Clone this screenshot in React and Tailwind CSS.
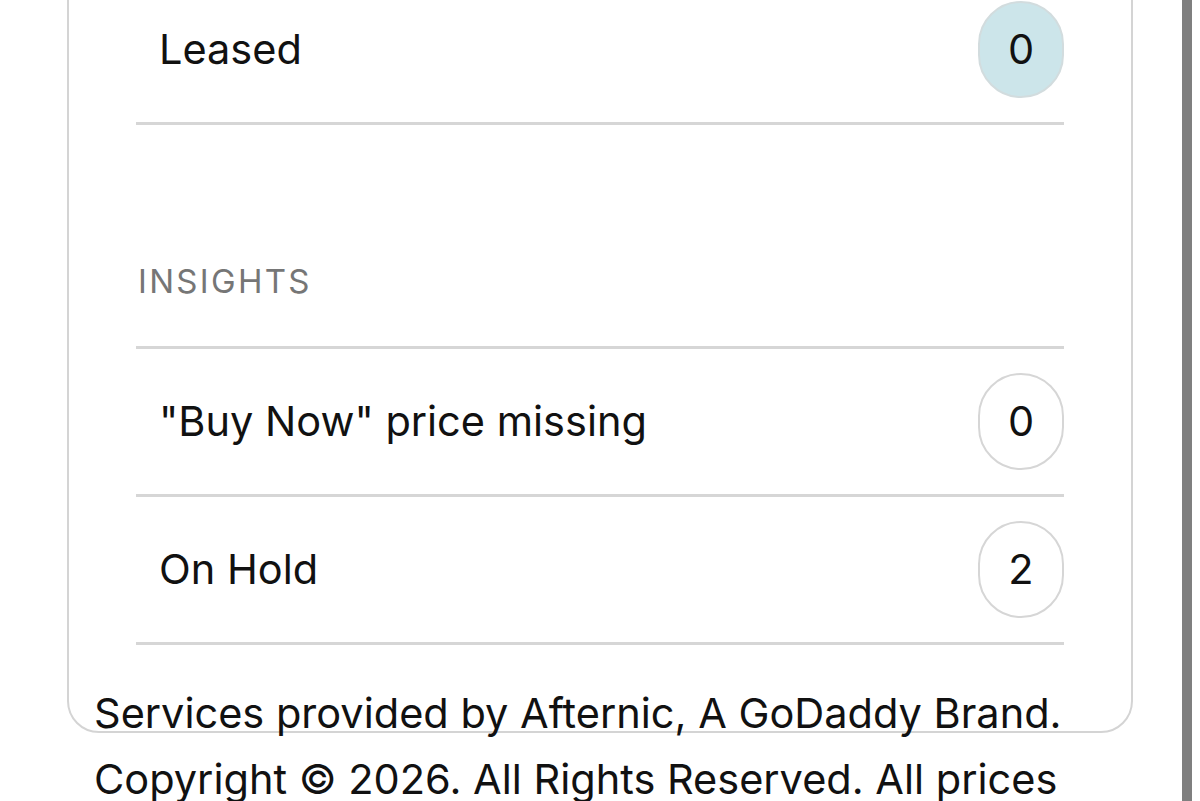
import React from "react";

function Row({ label, count, active }) {
  return (
    <div className="flex h-[148px] items-center justify-between border-b-[3px] border-[#d6d6d6] pl-[23px]">
      <span>{label}</span>
      <span
        className={
          "flex h-[97px] w-[86px] items-center justify-center rounded-full border-2 " +
          (active ? "border-[#d2dcde] bg-[#cce5ea]" : "border-[#d6d6d6] bg-white")
        }
      >
        {count}
      </span>
    </div>
  );
}

export default function App() {
  return (
    <div className="flex h-[801px] w-[1200px] overflow-hidden bg-white font-['Inter',sans-serif] text-[41.5px] leading-none text-[#111111]">
      <div className="w-[1182px] shrink-0">
        <div className="-mt-[25px] ml-[67px] mr-[49px] rounded-b-[32px] border-2 border-[#d4d4d4] px-[67px] pb-[86px]">
          <Row label="Leased" count="0" active />
          <div className="border-b-[3px] border-[#d6d6d6] pb-[49px] pl-[2px] pt-[140px] text-[33px] leading-[32px] tracking-[2.3px] text-[#767676]">
            INSIGHTS
          </div>
          <Row label={'"Buy Now" price missing'} count="0" />
          <Row label="On Hold" count="2" />
        </div>
        <div className="-mt-[53px] pl-[94px] pr-[102px] leading-[66px]">
          <p>Services provided by Afternic, A GoDaddy Brand.</p>
          <p>Copyright © 2026. All Rights Reserved. All prices are listed in USD.</p>
        </div>
      </div>
      <div className="h-full w-[10px] shrink-0 bg-[#7f7f7f]" />
    </div>
  );
}
